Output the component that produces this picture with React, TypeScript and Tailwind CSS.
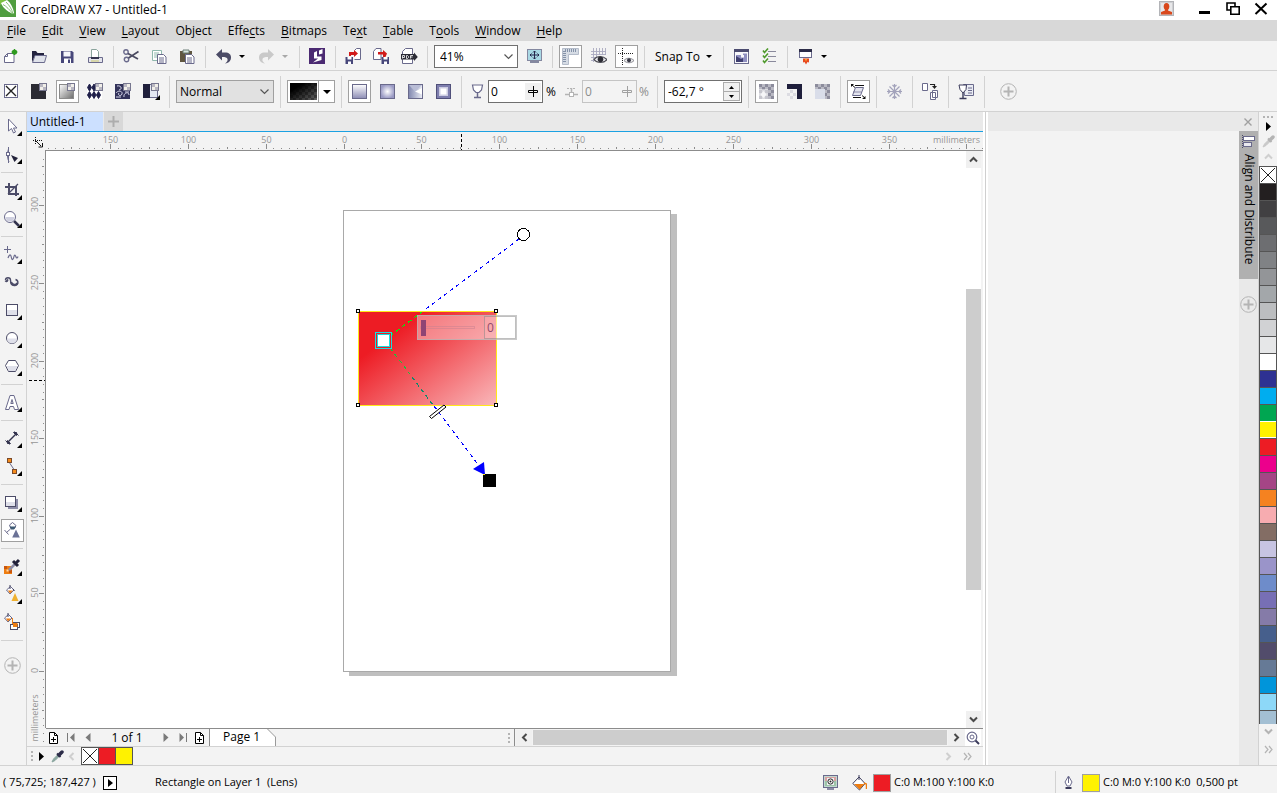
import React from "react";

const INK = "#3c3c5c";
const MID = "#6a6a8c";
const GREY = "#b4b4b4";

type Kids = { children?: React.ReactNode };

function Svg({ w = 17, h = 17, children }: { w?: number; h?: number } & Kids) {
  return (
    <svg width={w} height={h} viewBox={`0 0 ${w} ${h}`} fill="none" aria-hidden="true" className="block shrink-0">
      {children}
    </svg>
  );
}

function Tool({ label, active, children }: { label: string; active?: boolean } & Kids) {
  return (
    <button type="button" aria-label={label} className="flex h-[23px] w-7 shrink-0 items-center pl-[3px]">
      <span
        className={
          active
            ? "grid h-[23px] w-[23px] place-items-center border border-[#a0a0a0] bg-white"
            : "grid h-[23px] w-[23px] place-items-center border border-transparent"
        }
      >
        <Svg>{children}</Svg>
      </span>
    </button>
  );
}

function Sep({ tall }: { tall?: boolean }) {
  return (
    <span className="flex w-2 shrink-0 justify-center">
      <span className={tall ? "h-8 w-px bg-[#d2d2d2]" : "h-[22px] w-px bg-[#d2d2d2]"} />
    </span>
  );
}

function Caret({ color = "#000", label }: { color?: string; label: string }) {
  return (
    <button type="button" aria-label={label} className="flex h-[23px] w-[10px] shrink-0 items-center justify-center">
      <Svg w={6} h={3}>
        <path d="M0 0h6L3 3z" fill={color} />
      </Svg>
    </button>
  );
}

function Checker({ x, y, nx, ny, s, a, b }: { x: number; y: number; nx: number; ny: number; s: number; a: string; b: string }) {
  const cells = [];
  for (let i = 0; i < nx; i++)
    for (let j = 0; j < ny; j++)
      cells.push(<rect key={`${i}-${j}`} x={x + i * s} y={y + j * s} width={s} height={s} fill={(i + j) % 2 ? a : b} />);
  return <g shapeRendering="crispEdges">{cells}</g>;
}

function Corner() {
  return (
    <g>
      <rect x="8.5" y=".5" width="7" height="7" fill="#f1efe9" stroke="#77778f" />
      <path d="M9 1h3v3H9zM12 4h3v3h-3z" fill="#b9b7c2" />
    </g>
  );
}

function PlusCircle() {
  return (
    <Svg>
      <circle cx="8.5" cy="8.5" r="7.8" stroke={GREY} />
      <path d="M8.5 3.5v10M3.5 8.5h10" stroke={GREY} strokeWidth="2" />
    </Svg>
  );
}

const MENU: [string, string, string][] = [
  ["", "F", "ile"],
  ["", "E", "dit"],
  ["", "V", "iew"],
  ["", "L", "ayout"],
  ["Ob", "j", "ect"],
  ["Effe", "c", "ts"],
  ["", "B", "itmaps"],
  ["Te", "x", "t"],
  ["", "T", "able"],
  ["T", "o", "ols"],
  ["", "W", "indow"],
  ["", "H", "elp"],
];

function TitleBar() {
  return (
    <header className="flex h-5 shrink-0 items-start justify-between bg-white">
      <div className="flex h-5 items-center gap-[5px]">
        <span className="self-start">
          <Svg w={16} h={17}>
            <rect width="16" height="17" fill="#4f9d3f" />
            <path d="M0 0h6L0 5z" fill="#7cc142" />
            <path d="M1 3L7 0c4 3 6 8 7 12.5L13 14C9 12 3 9 1 3z" fill="#fff" />
            <path d="M3 4.500C6 6 10 10 13 14M6 2c3 3 6 7 7 12" stroke="#7dba6c" strokeWidth=".9" />
          </Svg>
        </span>
        <h1 className="text-xs">CorelDRAW X7 - Untitled-1</h1>
      </div>
      <div className="flex pr-[9px]">
        <button type="button" aria-label="Account" className="mr-[25px]">
          <Svg w={15} h={16}>
            <rect x=".5" y="1.500" width="14" height="14" fill="#cfd0d3" stroke="#b3b4b8" />
            <rect x="2" y="3" width="11" height="11" fill="#e8e8ea" />
            <ellipse cx="7.500" cy="6.500" rx="2.800" ry="3.500" fill="#d9481c" />
            <path d="M6 8h3v2.500l4 1.500v2.500H2V12l4-1.500z" fill="#d9481c" />
          </Svg>
        </button>
        <button type="button" aria-label="Minimize" className="mr-4">
          <Svg w={11} h={16}>
            <rect y="11" width="11" height="3" fill="#000" />
          </Svg>
        </button>
        <button type="button" aria-label="Restore" className="mr-[14px]">
          <Svg w={14} h={16}>
            <path d="M1 3h8v7H1z" stroke="#000" strokeWidth="1.600" />
            <path d="M4.800 6.800h8.400v7.400H4.800z" fill="#fff" stroke="#000" strokeWidth="1.600" />
          </Svg>
        </button>
        <button type="button" aria-label="Close">
          <Svg w={14} h={16}>
            <path d="M1.500 3.500l11 10.500M12.500 3.500l-11 10.500" stroke="#000" strokeWidth="2" />
          </Svg>
        </button>
      </div>
    </header>
  );
}

function MenuBar() {
  return (
    <nav className="flex h-[21px] shrink-0 items-center gap-4 bg-[#d8d8d8] pl-[7px]">
      {MENU.map(([a, u, b]) => (
        <button type="button" key={a + u + b} className="leading-4">
          {a}
          <span className="underline underline-offset-2">{u}</span>
          {b}
        </button>
      ))}
    </nav>
  );
}

function StandardBar() {
  return (
    <div className="flex h-[30px] shrink-0 items-center border-b border-[#d2d2d2] pt-[2px]">
      <div className="-ml-[3px] flex items-center">
        <Tool label="New">
          <path d="M1.500 8.500l3-3h6.500v9H1.500z" fill="#fff" stroke={MID} />
          <path d="M1.500 8.500h3v-3" stroke={MID} />
          <circle cx="11.500" cy="4" r="2.600" fill="#2e9a1e" />
          <path d="M11.500 1v6M8.500 4h6" stroke="#2e9a1e" />
        </Tool>
        <Tool label="Open">
          <path d="M1 14V3h4l1.500 2H13v3H4z" fill="#23233f" />
          <path d="M1.500 14.500L4 7.500h11.500l-2 7z" fill="#dfe2ea" stroke={MID} />
        </Tool>
        <Tool label="Save">
          <path d="M2 3h11l1.500 1.500V15H2z" fill="#47477a" />
          <rect x="4.500" y="3.500" width="7" height="5" fill="#f6f6fa" />
          <rect x="5" y="10.500" width="7" height="4.500" fill="#fff" />
          <rect x="9" y="11.500" width="2" height="3.500" fill="#47477a" />
        </Tool>
        <Tool label="Print">
          <path d="M4.500 10V1.500h5l2 2V10" fill="#fff" stroke="#8aa49c" />
          <path d="M1.500 9.500h14v5h-14z" fill="#e4e4ec" stroke={MID} />
          <path d="M4 10h8" stroke="#34344e" strokeWidth="2" />
          <path d="M4 13h8" stroke="#c9c86a" />
        </Tool>
        <Sep />
        <Tool label="Cut">
          <circle cx="3" cy="4" r="2.200" stroke={MID} strokeWidth="1.400" />
          <circle cx="3.500" cy="11.500" r="2.200" stroke={MID} strokeWidth="1.400" />
          <path d="M5 5.500l10 5.500M5.500 10L15.500 3.500" stroke="#4a4a60" strokeWidth="1.700" />
        </Tool>
        <Tool label="Copy">
          <path d="M1.500 2.500h9v10h-9z" fill="#fff" stroke="#8fb8ad" />
          <path d="M3 5h5M3 7h4M3 9h4" stroke="#8fb8ad" />
          <path d="M6.500 6.500h6l2.500 2.500v6.500H6.500z" fill="#fff" stroke={MID} />
          <path d="M8 10h5M8 12h5M8 14h5" stroke={MID} />
        </Tool>
        <Tool label="Paste">
          <path d="M1 3h12v11H1z" fill="#5f5640" />
          <path d="M4 2h6v3H4z" fill="#d8e6df" stroke="#6d7f78" />
          <path d="M6.500 6.500h6l2.500 2.500v6.500H6.500z" fill="#fff" stroke={MID} />
          <path d="M8 10h5M8 12h5M8 14h5" stroke={MID} />
        </Tool>
        <Sep />
        <Tool label="Undo">
          <path d="M1 6.500L7 1v3.500h3c4 0 6 2 6 5 0 3-2 5.500-6 6 2-1.500 3-3 2.500-4.500-.5-1.500-2-2-5.500-2V12.500z" fill="#4b4b66" />
        </Tool>
        <Caret label="Undo list" />
        <span className="w-[5px]" />
        <Tool label="Redo">
          <path d="M16 6.500L10 1v3.500H7c-4 0-6 2-6 5 0 3 2 5.500 6 6-2-1.500-3-3-2.500-4.500.5-1.500 2-2 5.500-2V12.500z" fill="#c9c9c9" />
        </Tool>
        <Caret label="Redo list" color="#a8a8a8" />
        <span className="w-[5px]" />
        <Sep />
        <Tool label="Search Content">
          <rect x="0" y="0" width="16" height="16" fill="#4b2a72" />
          <path d="M5 4.500l3-1.500v5.500h4.500v3.500L4 14.500l5-4H5z" fill="#fff" />
          <path d="M10 2.500l3.500-1.500v4.500L10 6.500z" fill="#fff" />
        </Tool>
        <Sep />
        <Tool label="Import">
          <path d="M9.500 2.500l2-2h4v11h-6" fill="#fff" stroke={MID} />
          <path d="M4 8V4h5V2l4 3.500-4 3.500V7H6v1z" fill="#d11a1a" />
          <path d="M.5 9H8v7H.5z" fill="#47477a" />
          <path d="M2.500 9h4v2.500h-4zM3 13.500h3V16H3z" fill="#fff" />
        </Tool>
        <Tool label="Export">
          <path d="M.5 11.500V3.500l2.500-3h5v11z" fill="#fff" stroke={MID} />
          <path d="M5 4h5V2l4 3.500L12.500 9 10 9V6.500H5z" fill="#d11a1a" />
          <path d="M8.500 9H16v7H8.500z" fill="#47477a" />
          <path d="M10.500 9h4v2.500h-4zM11 13.500h3V16h-3z" fill="#fff" />
        </Tool>
        <Tool label="Publish to PDF">
          <path d="M1.500 15.500v-12l3-3h7v15z" fill="#fff" stroke={MID} />
          <path d="M0 6h13V4.500L16.800 9 13 13v-1.500H0z" fill="#2b2b35" />
          <path d="M1.500 10.500v-3h2v2h-2M5.500 7.500v3h1l1-1v-1l-1-1zM9.500 10.500v-3h2.500M9.500 9h2" stroke="#fff" strokeWidth=".8" />
        </Tool>
        <Sep />
        <div className="relative ml-[3px] flex h-[23px] w-[84px] items-center border border-[#707070] bg-white">
          <select aria-label="Zoom level" defaultValue="41%" className="h-full w-full appearance-none bg-transparent pl-[5px] outline-none">
            <option>41%</option>
          </select>
          <span className="pointer-events-none absolute right-1">
            <Svg w={9} h={6}>
              <path d="M.5.5l4 4 4-4" stroke="#555" strokeWidth="1.200" />
            </Svg>
          </span>
        </div>
        <span className="w-[2px]" />
        <Tool label="Full Screen Preview">
          <rect x="1.500" y="1.500" width="14" height="11" fill="#a9d8e4" stroke="#8488a0" />
          <path d="M8.500 3v8M4 7h9M7 4.500L8.500 3 10 4.500M7 9.500L8.500 11 10 9.500M5.500 5.500L4 7l1.500 1.500M11.500 5.500L13 7l-1.500 1.500" stroke="#25254a" />
          <path d="M4 14h9" stroke="#8488a0" strokeWidth="2" />
        </Tool>
        <Sep />
        <Tool label="Show Rulers" active>
          <path d="M.5.5h16v6h-10v10h-6z" fill="#d5dbe4" stroke="#b4bcca" />
          <path d="M3 2.500h12M2.500 3v12" stroke="#8492a8" strokeDasharray="1 1" strokeWidth="3" />
        </Tool>
        <Tool label="Show Grid">
          <path d="M1 3.500h15M1 6.500h15M1 9.500h6M1 12.500h4M3.500 0v14M6.500 0v12M9.500 0v7M12.500 0v7M15.500 0v7" stroke="#a9a9c0" strokeWidth=".9" />
          <path d="M4 11.500c3-4 9-4 13 0-3 4-10 4-13 0z" fill="#e9e9ee" stroke="#4d4d55" strokeWidth="1.200" />
          <circle cx="10.500" cy="11.300" r="2.800" fill="#2d2d35" />
        </Tool>
        <Tool label="Show Guidelines" active>
          <path d="M0 5.500h16M4.500 0v17" stroke="#222" strokeDasharray="1 1" />
          <path d="M6 12.500c2.500-3 7-3 10 0-2.500 3-7.500 3-10 0z" fill="#eee" stroke="#8a8a92" />
          <circle cx="11" cy="12.300" r="2" fill="#3b3b48" />
        </Tool>
        <Sep />
        <button type="button" className="flex h-[23px] w-[71px] items-center justify-between pl-[7px] pr-[7px]">
          Snap To
          <Svg w={6} h={3}>
            <path d="M0 0h6L3 3z" fill="#000" />
          </Svg>
        </button>
        <Sep />
        <Tool label="Options">
          <rect x="1.500" y="1.500" width="14" height="14" fill="#f8f8fb" stroke={MID} />
          <rect x="1" y="1" width="15" height="3" fill="#4c4c70" />
          <path d="M3 7h5v2.500h3V7H10V5.500h4V14H3z" fill="#8f8fc0" />
          <path d="M3 8l5 3 2-1v4H3z" fill="#3f3f70" />
        </Tool>
        <Tool label="Launch Options">
          <path d="M7 3.500h8M7 8.500h8M7 13.500h8" stroke="#8a8a9c" strokeWidth="1.200" />
          <path d="M2 2.500l1.500 2L7 .5M2 7.500l1.500 2 3.500-4M2 12.500l1.500 2 3.500-4" stroke="#4f9a2c" strokeWidth="1.600" />
        </Tool>
        <Sep />
        <Tool label="Application Launcher">
          <rect x="2.500" y="1.500" width="12" height="8" fill="#fff" stroke={MID} />
          <rect x="2" y="1" width="13" height="3" fill="#2c2c48" />
          <path d="M6 10.500h6v4l-1.500-.5-1.500 2.500-1.500-2.500-1.500.5z" fill="#e8491f" />
          <path d="M8 11h2l-1 2.500z" fill="#ffc02e" />
        </Tool>
        <Caret label="Launcher list" />
      </div>
    </div>
  );
}

function GradientDefs() {
  return (
    <defs>
      <linearGradient id="gLin" x1="0" y1="0" x2="0" y2="1">
        <stop offset="0" stopColor="#fff" />
        <stop offset="1" stopColor="#8d8db5" />
      </linearGradient>
      <radialGradient id="gRad">
        <stop offset="0" stopColor="#fff" />
        <stop offset="1" stopColor="#9a9ac4" />
      </radialGradient>
      <linearGradient id="gCon" x1="0" y1="0" x2="1" y2="0">
        <stop offset="0" stopColor="#7f86ae" />
        <stop offset="1" stopColor="#eceef6" />
      </linearGradient>
      <linearGradient id="gGrey" x1="0" y1="0" x2="1" y2="1">
        <stop offset="0" stopColor="#fff" />
        <stop offset="1" stopColor="#6c6c6c" />
      </linearGradient>
      <linearGradient id="gBlack" x1="0" y1="0" x2="1" y2="1">
        <stop offset="0.250" stopColor="#000" />
        <stop offset="1" stopColor="#000" stopOpacity="0.300" />
      </linearGradient>
    </defs>
  );
}

function SliderIcon({ color }: { color: string }) {
  return (
    <Svg w={10} h={11}>
      <path d="M5.500 0v11" stroke={color} />
      <path d="M.5 4.500h9v2h-9z" fill="#f4f4f4" stroke={color} />
      <path d="M5.500 4v7" stroke={color} />
    </Svg>
  );
}

function PropertyBar() {
  return (
    <div className="flex h-[41px] shrink-0 items-center border-b border-[#d2d2d2] pt-px">
      <div className="-ml-[3px] flex items-center">
        <Tool label="No Transparency">
          <rect x="1.500" y="1.500" width="13" height="13" fill="#fff" stroke={MID} />
          <path d="M3 3l10 10M13 3L3 13" stroke="#222" strokeWidth="1.400" />
        </Tool>
        <Tool label="Uniform Transparency">
          <rect x="0" y="1" width="15" height="15" fill="#2b2b33" />
          <Corner />
        </Tool>
        <Tool label="Fountain Transparency" active>
          <GradientDefs />
          <rect x=".5" y="1.500" width="14" height="14" fill="url(#gGrey)" stroke="#8a8a8a" />
          <Corner />
        </Tool>
        <Tool label="Vector Pattern Transparency">
          <rect x="0" y="1" width="15" height="15" fill="#fff" />
          <path d="M2.500 1l2 3.500-2 3.500-2-3.500zM7 1l2 3.500L7 8 5 4.500zM2.500 8.500l2 3.500-2 3.500-2-3.500zM7 8.500L9 12l-2 3.500L5 12zM11.500 8.500l2 3.500-2 3.500-2-3.500z" fill="#20204a" stroke="#20204a" />
          <Corner />
        </Tool>
        <Tool label="Bitmap Pattern Transparency">
          <rect x="0" y="1" width="15" height="15" fill="#33335a" />
          <path d="M2 3c4-1 6 3 2 4M1 10c2-3 7-2 6 1s-5 1-3-1M9 14c-1-4 5-6 5-2M10 9h4M1 14h5" stroke="#d5d5e8" />
          <Corner />
        </Tool>
        <Tool label="Two-Color Pattern Transparency">
          <rect x=".5" y="1.500" width="14" height="13" fill="#e4e8f2" stroke={MID} />
          <rect x="0" y="1" width="7" height="14" fill="#20203c" />
          <Corner />
          <path d="M17 12v5h-5z" fill="#000" />
        </Tool>
        <Sep tall />
        <div className="relative ml-[3px] mr-[2px] flex h-[23px] w-[98px] items-center border border-[#a0a0a0] bg-[#e1e1e1]">
          <select aria-label="Merge mode" defaultValue="Normal" className="h-full w-full appearance-none bg-transparent pl-[3px] outline-none">
            <option>Normal</option>
          </select>
          <span className="pointer-events-none absolute right-1">
            <Svg w={9} h={6}>
              <path d="M.5.5l4 4 4-4" stroke="#555" strokeWidth="1.200" />
            </Svg>
          </span>
        </div>
        <Sep tall />
        <button type="button" aria-label="Transparency picker" className="ml-[3px] mr-[2px] flex h-[23px] w-12 items-center border border-[#a0a0a0] bg-white">
          <span className="flex h-full w-[31px] items-center justify-center border-r border-[#a0a0a0]">
            <Svg w={27} h={17}>
              <Checker x={0} y={0} nx={9} ny={6} s={3} a="#8c8c8c" b="#5f5f5f" />
              <rect width="27" height="17" fill="url(#gBlack)" />
            </Svg>
          </span>
          <span className="flex flex-1 justify-center">
            <Svg w={8} h={4}>
              <path d="M0 0h8L4 4z" fill="#000" />
            </Svg>
          </span>
        </button>
        <Sep tall />
        <Tool label="Linear" active>
          <rect x="1.500" y="1.500" width="14" height="14" fill="url(#gLin)" stroke={MID} />
        </Tool>
        <Tool label="Elliptical">
          <rect x="1.500" y="1.500" width="14" height="14" fill="url(#gRad)" stroke={MID} />
        </Tool>
        <Tool label="Conical">
          <rect x="1.500" y="1.500" width="14" height="14" fill="url(#gCon)" stroke={MID} />
          <path d="M2 2h13L8 8.500z" fill="#b9bdd6" />
          <path d="M15 5L8 8.500l7 3z" fill="#fff" />
        </Tool>
        <Tool label="Rectangular">
          <rect x="1.500" y="1.500" width="14" height="14" fill="#7e7eae" stroke="#50507a" />
          <rect x="4" y="4" width="9" height="9" fill="#cdcde2" />
          <rect x="5.500" y="5.500" width="6" height="6" fill="#fff" />
        </Tool>
        <Sep tall />
        <span className="flex w-[23px] justify-center pl-[2px]">
          <Svg w={13} h={15}>
            <path d="M1.500 1h10l-1 5-2.500 2.500h-3L2.500 6z" fill="#fff" stroke={MID} strokeWidth="1.200" />
            <path d="M6.500 8.500V14M3 13.500h7" stroke={MID} strokeWidth="1.500" />
          </Svg>
        </span>
        <div className="flex h-[23px] w-[55px] items-center border border-[#707070] bg-white">
          <input aria-label="Node transparency" defaultValue="0" className="h-full w-9 pl-[2px] outline-none" />
          <span className="grid h-[17px] w-4 place-items-center bg-[#f0f0f0]">
            <SliderIcon color="#000" />
          </span>
        </div>
        <span className="w-[18px] pl-[3px]">%</span>
        <span className="flex w-[21px] justify-center">
          <Svg w={13} h={12}>
            <path d="M2 2.500h9" stroke={GREY} strokeDasharray="2 1" />
            <path d="M0 8.500h4M9 8.500h4M6.500 2v4" stroke={GREY} strokeWidth="1.500" />
            <rect x="4.500" y="6.500" width="4" height="4" fill="#fff" stroke={GREY} />
          </Svg>
        </span>
        <div className="flex h-[23px] w-[55px] items-center border border-[#c4c4c4] bg-[#f3f3f3]">
          <input aria-label="Node position" disabled defaultValue="0" className="h-full w-9 pl-[2px] text-[#8d8d8d]" />
          <span className="grid h-[17px] w-4 place-items-center">
            <SliderIcon color="#a0a0a0" />
          </span>
        </div>
        <span className="w-[16px] pl-[2px] text-[#8d8d8d]">%</span>
        <Sep tall />
        <div className="ml-[3px] mr-[2px] flex h-[23px] w-[78px] items-center border border-[#707070] bg-white">
          <input aria-label="Rotate" defaultValue="-62,7 °" className="h-full min-w-0 flex-1 pl-[3px] outline-none" />
          <span className="mr-px flex h-[19px] w-[17px] flex-col border border-[#acacac] bg-[#f0f0f0]">
            <button type="button" aria-label="Increase" className="grid flex-1 place-items-center border-b border-[#acacac]">
              <Svg w={5} h={3}>
                <path d="M0 3h5L2.500 0z" fill="#000" />
              </Svg>
            </button>
            <button type="button" aria-label="Decrease" className="grid flex-1 place-items-center">
              <Svg w={5} h={3}>
                <path d="M0 0h5L2.500 3z" fill="#000" />
              </Svg>
            </button>
          </span>
        </div>
        <Sep tall />
        <Tool label="All" active>
          <Checker x={1} y={1} nx={5} ny={5} s={3} a="#b9b9c3" b="#8c8c9c" />
          <path d="M1 6h9v10H1z" fill="#fff" opacity=".5" />
          <path d="M5.500 8l3 3.500-3 3.500-3-3.500z" fill="#f6f6f8" />
        </Tool>
        <Tool label="Fill">
          <path d="M1 1h15v15h-5V6H1z" fill="#1f1f3c" />
          <Checker x={1} y={7} nx={3} ny={3} s={3} a="#dcdce2" b="#f4f4f4" />
        </Tool>
        <Tool label="Outline">
          <Checker x={1} y={1} nx={5} ny={5} s={3} a="#b9b9c3" b="#8c8c9c" />
          <rect x="1" y="6" width="10" height="10" fill="#d9dde9" />
        </Tool>
        <Sep tall />
        <Tool label="Free Scale and Skew" active>
          <path d="M5.500 4.500h8l-3 8h-8z" fill="#e3e4ee" stroke={MID} />
          <path d="M3 9h8.500" stroke={MID} strokeWidth=".7" />
          <path d="M2 2l3 2.500M12 12.500l3 2.500M5 2.500h9M3 14.500h8" stroke="#111" />
          <path d="M1 1h3l-3 3zM15.500 16h-3.500l3.500-3z" fill="#111" />
        </Tool>
        <Sep tall />
        <Tool label="Freeze Transparency">
          <path d="M8.500 1v15M1 8.500h15M3.500 3.500l10 10M13.500 3.500l-10 10M6.500 2l2 2 2-2M6.500 15l2-2 2 2M2 6.500l2 2-2 2M15 6.500l-2 2 2 2" stroke="#a3a3bb" strokeWidth="1.200" />
        </Tool>
        <Sep tall />
        <Tool label="Copy Transparency">
          <path d="M.5.500h5v7h-5z" fill="#fff" stroke={MID} />
          <path d="M8 1.500h4.500v2" stroke="#222" strokeWidth="1.200" />
          <path d="M10 3h5l-2.500 3z" fill="#222" />
          <path d="M10.500 7.500h5v7h-5zM8.500 9.500h5v7h-5z" fill="#fff" stroke={MID} />
        </Tool>
        <Sep tall />
        <Tool label="Edit Transparency">
          <path d="M5.500 1.500h10v11h-9z" fill="#e9ebf3" stroke={MID} />
          <path d="M10 5h4M10 7.500h4M10 10h4" stroke={MID} />
          <path d="M1 2h7.500L8 6.500 5 10 2 6.500z" fill="#fff" stroke={INK} />
          <path d="M5 10v5M1.500 15.500h7" stroke={INK} strokeWidth="1.400" />
        </Tool>
        <Sep tall />
        <button type="button" aria-label="Customize" className="ml-3">
          <PlusCircle />
        </button>
      </div>
    </div>
  );
}

type BoxItem = { label: string; icon?: React.ReactNode; fly?: boolean; active?: boolean; sep?: boolean };

const BOX: BoxItem[] = [
  { label: "Pick", fly: true, icon: <path d="M8.500 7v12l3-2.500 2 4.500 2-1-2-4h3.500z" fill="#fff" stroke={MID} /> },
  {
    label: "Shape",
    fly: true,
    icon: (
      <g>
        <path d="M8.500 7v16M8.500 9C7 13 7 18 9 22" stroke={MID} />
        <rect x="6.500" y="12.500" width="3" height="3" fill="#fff" stroke={MID} />
        <path d="M11 15l7 3-3.500 4z" fill="#22223a" />
      </g>
    ),
  },
  { label: "s1", sep: true },
  {
    label: "Crop",
    fly: true,
    icon: (
      <g stroke="#4c4c68" strokeWidth="2">
        <path d="M9 7v11h10M5 11h11v9" />
        <path d="M8 18L18 8" strokeWidth="1.200" />
      </g>
    ),
  },
  {
    label: "Zoom",
    fly: true,
    icon: (
      <g>
        <path d="M14 17l5 5" stroke="#33334e" strokeWidth="2.500" />
        <circle cx="10" cy="13" r="5.500" fill="#fff" stroke={MID} />
        <path d="M5.500 13h9a4.500 4.500 0 0 1-9 0z" fill="#cfd0e0" />
      </g>
    ),
  },
  { label: "s2", sep: true },
  {
    label: "Freehand",
    fly: true,
    icon: (
      <g stroke={MID}>
        <path d="M7.500 6v7M4 9.500h7" />
        <path d="M8 18c2-5 3-3 3.500 0s2 1 2.500-1.500 1.500-1 2 .5 1.500 1 2-.5" strokeWidth="1.200" />
      </g>
    ),
  },
  {
    label: "Artistic Media",
    icon: (
      <g stroke="#4c4c68">
        <path d="M5.500 12c0-3 5-3 5 0 0 4 1 6 4.500 5.500 3.500-.5 4-5 .5-6" strokeWidth="1.400" />
        <path d="M5.500 12.500c1 1.500 2.500 0 1.500-1M11 14c1 3 5 4 6.500 1" strokeWidth="2.200" />
      </g>
    ),
  },
  {
    label: "Rectangle",
    fly: true,
    icon: (
      <g>
        <rect x="6.500" y="8.500" width="11" height="11" fill="#fff" stroke="#4c4c68" />
        <rect x="7" y="14" width="10" height="5" fill="#dfe0ea" />
      </g>
    ),
  },
  {
    label: "Ellipse",
    fly: true,
    icon: (
      <g>
        <circle cx="12" cy="14" r="5.500" fill="#fff" stroke="#4c4c68" />
        <path d="M7 14.500h10a5 5 0 0 1-10 0z" fill="#dfe0ea" />
      </g>
    ),
  },
  {
    label: "Polygon",
    fly: true,
    icon: (
      <g>
        <path d="M8.500 8.500h7l3 5-3 6h-7l-3-6z" fill="#fff" stroke="#4c4c68" />
        <path d="M6.500 14h11l-2.500 5H9z" fill="#dfe0ea" />
      </g>
    ),
  },
  { label: "s3", sep: true },
  {
    label: "Text",
    fly: true,
    icon: (
      <g>
        <path d="M5.500 21.500l4.500-14h4l4.500 14h-4l-1-3h-3.500l-1 3z" fill="#fff" stroke={MID} />
        <path d="M10.800 15.500L12 11.500l1.200 4z" fill="#f3f3f3" stroke={MID} />
      </g>
    ),
  },
  { label: "s4", sep: true },
  {
    label: "Dimension",
    fly: true,
    icon: (
      <g stroke="#33334e">
        <path d="M7 19L17 9" strokeWidth="1.500" />
        <path d="M5.500 16.500l4 4M14.500 7.500l4 4" />
        <path d="M7.500 16.500v3h3zM13.500 8.500h3v3z" fill="#33334e" />
      </g>
    ),
  },
  {
    label: "Connector",
    fly: true,
    icon: (
      <g>
        <path d="M9 10l6 9" stroke={MID} />
        <rect x="7.500" y="6.500" width="4" height="4" fill="#f58a1a" stroke="#7a4a2a" />
        <rect x="12.500" y="17.500" width="4" height="4" fill="#f58a1a" stroke="#7a4a2a" />
      </g>
    ),
  },
  { label: "s5", sep: true },
  {
    label: "Drop Shadow",
    fly: true,
    icon: (
      <g>
        <rect x="8" y="11" width="10" height="10" fill="#8d8da8" />
        <rect x="5.500" y="8.500" width="10" height="10" fill="#fff" stroke="#4c4c68" />
        <rect x="6" y="14" width="9" height="4" fill="#dfe0ea" />
      </g>
    ),
  },
  {
    label: "Transparency",
    active: true,
    icon: (
      <g>
        <path d="M9.500 9l3-2.500 3.500 3-1.500 3-3.500 0z" fill="#fff" stroke={MID} />
        <path d="M9.500 10.500h6.500l-2 3h-3z" fill="#3e5a74" />
        <path d="M10.500 13l-4 3.500M4.500 14l4 4.500" stroke={MID} />
        <path d="M16 13.500l3.800 8h-7.600z" fill="#6b7296" />
      </g>
    ),
  },
  { label: "s6", sep: true },
  {
    label: "Color Eyedropper",
    fly: true,
    icon: (
      <g>
        <rect x="4" y="14" width="8" height="8" fill="#ee7d11" />
        <path d="M4 14h3v3H4zM9 18h3v3H9z" fill="#c9560c" />
        <path d="M6.500 17.500h2v2h-2z" fill="#ffd9a8" />
        <path d="M9 18l7-7" stroke="#8c8ca6" strokeWidth="2.500" />
        <path d="M13 9l5 5M15.500 11.500L19 8" stroke="#22223a" strokeWidth="3" />
      </g>
    ),
  },
  {
    label: "Interactive Fill",
    fly: true,
    icon: (
      <g>
        <path d="M6.500 10l4-3.500L14 10l-4 4z" fill="#fff" stroke={MID} />
        <path d="M8 10.500h5L10 13.500z" fill="#ee7d11" />
        <path d="M10 5v4M13 9l1.500 2" stroke={INK} />
        <path d="M15 13l3.500 8h-7z" fill="#efb02e" />
      </g>
    ),
  },
  {
    label: "Smart Fill",
    icon: (
      <g>
        <path d="M4.500 10l4-3.500L12 10l-4 4z" fill="#fff" stroke={MID} />
        <path d="M6 10.500h5L8 13.500z" fill="#ee7d11" />
        <path d="M8 5v4" stroke={INK} />
        <rect x="12.500" y="14.500" width="7" height="5" fill="#fff" stroke="#4c4c68" />
        <rect x="10.500" y="16.500" width="7" height="5" fill="#fff" stroke="#4c4c68" />
        <rect x="13" y="15" width="4.500" height="4" fill="#ee7d11" />
        <path d="M12.500 10v6" stroke="#ee7d11" />
      </g>
    ),
  },
  { label: "s7", sep: true },
];

function Toolbox() {
  return (
    <aside className="flex w-[27px] shrink-0 flex-col items-start border-r border-[#d2d2d2]">
      {BOX.map((b) =>
        b.sep ? (
          <span key={b.label} className="flex h-2 shrink-0 items-center pl-px">
            <span className="h-px w-[22px] bg-[#d2d2d2]" />
          </span>
        ) : (
          <button
            type="button"
            key={b.label}
            aria-label={b.label}
            className={b.active ? "h-7 w-6 shrink-0 py-[3px] pl-px" : "h-7 w-6 shrink-0"}
          >
            {b.active ? (
              <span className="block h-[23px] w-[23px] overflow-hidden border border-[#a0a0a0] bg-white">
                <svg width="21" height="21" viewBox="2 4 21 21" fill="none" aria-hidden="true">
                  {b.icon}
                </svg>
              </span>
            ) : (
              <Svg w={24} h={28}>
                {b.icon}
                {b.fly && <path d="M22 19v5h-5z" fill="#000" />}
              </Svg>
            )}
          </button>
        ),
      )}
      <button type="button" aria-label="Customize toolbox" className="ml-1 mt-[13px]">
        <PlusCircle />
      </button>
    </aside>
  );
}

const PX_PER_MM = 327 / 210;

function TopRuler() {
  const x0 = 317;
  const ticks = [];
  for (let mm = -190; mm <= 410; mm += 5) {
    const x = Math.floor(x0 + mm * PX_PER_MM) + 0.5;
    if (x < 19) continue;
    const major = mm % 50 === 0;
    const top = major ? 12 : mm % 25 === 0 ? 15 : 16;
    ticks.push(<path key={mm} d={`M${x} ${top}V17`} stroke="#8c8c8c" />);
    if (major && mm < 400)
      ticks.push(
        <text key={`t${mm}`} x={x} y="11" textAnchor="middle" fill="#969696" fontSize="9">
          {Math.abs(mm)}
        </text>,
      );
  }
  return (
    <svg className="block h-[19px] w-full shrink-0" fill="none">
      <path d="M6 8.500h6M8.500 5v7M12 8.500h4" stroke="#111" strokeDasharray="1 1" />
      <path d="M9 9l5 5M15.500 11v4h-4" stroke="#111" />
      {ticks}
      <text x="906" y="11" fill="#969696" fontSize="9">
        millimeters
      </text>
      <path d="M434.500 2v16" stroke="#000" strokeDasharray="3 2" />
      <path d="M18 18.500h1200" stroke="#8c8c8c" />
    </svg>
  );
}

function LeftRuler() {
  const y0 = 520.5;
  const ticks = [];
  for (let mm = -45; mm <= 330; mm += 5) {
    const y = Math.floor(y0 - mm * PX_PER_MM * 0.997) + 0.5;
    const major = mm % 50 === 0;
    const left = major ? 12 : mm % 25 === 0 ? 15 : 16;
    ticks.push(<path key={mm} d={`M${left} ${y}H17`} stroke="#8c8c8c" />);
    if (major)
      ticks.push(
        <text key={`t${mm}`} x="11" y={y - 1} textAnchor="middle" fill="#969696" fontSize="9" transform={`rotate(-90 11 ${y - 1})`}>
          {mm}
        </text>,
      );
  }
  return (
    <svg className="block h-full w-[19px] shrink-0" fill="none">
      {ticks}
      <text x="11" y="567" textAnchor="middle" fill="#969696" fontSize="9" transform="rotate(-90 11 567)">
        millimeters
      </text>
      <path d="M2 229.500h16" stroke="#000" strokeDasharray="3 2" />
      <path d="M18.500 0v577" stroke="#8c8c8c" />
    </svg>
  );
}

function Canvas() {
  return (
    <div className="relative min-w-0 flex-1 overflow-hidden bg-white">
      <svg className="absolute inset-0 h-full w-full" fill="none">
        <defs>
          <linearGradient id="fade" gradientUnits="userSpaceOnUse" x1="383" y1="341" x2="489" y2="480">
            <stop offset="0" stopColor="#ed1c24" />
            <stop offset="1" stopColor="#fff" />
          </linearGradient>
        </defs>
        <g transform="translate(-46 -151)">
          <rect x="349" y="214" width="328" height="462" fill="#bfbfbf" />
          <rect x="343.500" y="210.500" width="327" height="461" fill="#fff" stroke="#a9a9a9" />
          <rect x="358.500" y="311.500" width="138" height="94" fill="url(#fade)" stroke="#ffe81a" />
          <g fill="#fff" stroke="#000">
            <rect x="356.500" y="309.500" width="3" height="3" />
            <rect x="494.500" y="309.500" width="3" height="3" />
            <rect x="356.500" y="403.500" width="3" height="3" />
            <rect x="494.500" y="403.500" width="3" height="3" />
          </g>
          <g strokeWidth="1" strokeDasharray="4 3.500" shapeRendering="crispEdges">
            <path d="M390 336L422 312" stroke="#10e010" />
            <path d="M426 309L519 239" stroke="#00f" />
            <path d="M390 348L410 374" stroke="#1cc03a" />
            <path d="M412 377L433 405" stroke="#128a6a" />
            <path d="M434 406L480 467" stroke="#00f" />
          </g>
          <rect x="375.500" y="332.500" width="16" height="16" fill="#ed1c24" stroke="#17e0e0" />
          <rect x="377.500" y="334.500" width="12" height="12" fill="#fff" stroke="#17e0e0" />
          <circle cx="523.500" cy="234.500" r="6" fill="#fff" stroke="#000" shapeRendering="crispEdges" />
          <path d="M429.500 416.500L444 405l2 2-14.500 11.500z" fill="#fff" stroke="#000" />
          <path d="M473 469l11-7 1 13z" fill="#00f" />
          <rect x="483" y="474" width="13" height="13" fill="#000" />
          <rect x="483" y="474" width="2" height="1" fill="#fff200" />
        </g>
      </svg>
      <div className="absolute left-[371px] top-[164px] flex h-[25px] w-[100px] items-center border border-[#b4b4b4]/70 bg-white/40">
        <input
          type="range"
          aria-label="Transparency amount"
          min="0"
          max="100"
          defaultValue="0"
          className="ml-[2px] h-4 w-[55px] appearance-none bg-transparent [&::-webkit-slider-runnable-track]:h-[3px] [&::-webkit-slider-runnable-track]:border [&::-webkit-slider-runnable-track]:border-[#c88090]/50 [&::-webkit-slider-thumb]:mt-[-7px] [&::-webkit-slider-thumb]:h-4 [&::-webkit-slider-thumb]:w-[5px] [&::-webkit-slider-thumb]:appearance-none [&::-webkit-slider-thumb]:bg-[#8f4474]"
        />
        <input
          aria-label="Transparency value"
          defaultValue="0"
          className="ml-auto h-full w-8 border border-[#808080]/50 bg-white/10 pl-[2px] text-[#93496a] outline-none"
        />
      </div>
    </div>
  );
}

function Chevron({ dir, color = "#4a4a4a" }: { dir: "up" | "down" | "left" | "right"; color?: string }) {
  const d = {
    up: "M1 6.500L4.500 3 8 6.500",
    down: "M1 2.500L4.500 6 8 2.500",
    left: "M6.500 1L3 4.500 6.500 8",
    right: "M2.500 1L6 4.500 2.500 8",
  }[dir];
  return (
    <Svg w={9} h={9}>
      <path d={d} stroke={color} strokeWidth="2" />
    </Svg>
  );
}

function AddPage() {
  return (
    <Svg w={11} h={12}>
      <path d="M1.500.500h5l3 3v8h-8z" fill="#fff" stroke="#000" />
      <path d="M6.500.500v3h3M5.500 5v5M3 7.500h5" stroke="#000" />
    </Svg>
  );
}

function PageBar() {
  return (
    <div className="flex h-[17px] shrink-0 items-center">
      <div className="flex h-full w-[469px] shrink-0 items-center border-r border-[#8c8c8c] pl-[2px]">
        <button type="button" aria-label="Add page before">
          <AddPage />
        </button>
        <button type="button" aria-label="First page" className="ml-2">
          <Svg w={8} h={9}>
            <path d="M.5 0v9" stroke="#7a7a7a" />
            <path d="M7.500 0v9L3 4.500z" fill="#7a7a7a" />
          </Svg>
        </button>
        <button type="button" aria-label="Previous page" className="ml-[10px]">
          <Svg w={6} h={9}>
            <path d="M5.500 0v9L.5 4.500z" fill="#7a7a7a" />
          </Svg>
        </button>
        <span className="w-[72px] text-center leading-4">1 of 1</span>
        <button type="button" aria-label="Next page">
          <Svg w={6} h={9}>
            <path d="M.5 0v9l5-4.500z" fill="#7a7a7a" />
          </Svg>
        </button>
        <button type="button" aria-label="Last page" className="ml-[10px]">
          <Svg w={8} h={9}>
            <path d="M7.500 0v9" stroke="#7a7a7a" />
            <path d="M.5 0v9L5 4.500z" fill="#7a7a7a" />
          </Svg>
        </button>
        <button type="button" aria-label="Add page after" className="ml-[7px]">
          <AddPage />
        </button>
        <button type="button" className="relative ml-1 flex h-full w-[67px] items-start border-l border-[#8c8c8c] bg-white pl-[13px] leading-[15px]">
          Page 1
          <span className="absolute right-0 top-0">
            <Svg w={9} h={17}>
              <path d="M0 0h9v17h-1V8z" fill="#f3f3f3" />
              <path d="M.5 0l8 8v9" stroke="#9a9a9a" />
            </Svg>
          </span>
        </button>
        <span className="ml-auto mr-[3px]">
          <Svg w={3} h={10}>
            <path d="M0 0h2v2H0zM0 4h2v2H0zM0 8h2v2H0z" fill={GREY} />
          </Svg>
        </span>
      </div>
      <div className="flex h-full min-w-0 flex-1 items-center gap-px pl-px">
        <button type="button" aria-label="Scroll left" className="grid h-4 w-4 place-items-center bg-[#f0f0f0]">
          <Chevron dir="left" />
        </button>
        <span className="h-[15px] flex-1 bg-[#cdcdcd]" />
        <button type="button" aria-label="Scroll right" className="grid h-4 w-[17px] place-items-center bg-[#f0f0f0]">
          <Chevron dir="right" />
        </button>
      </div>
      <button type="button" aria-label="Navigator" className="mr-[2px] grid h-full w-4 place-items-center bg-white">
        <Svg w={14} h={14}>
          <circle cx="6" cy="6" r="4.800" stroke={MID} strokeWidth="1.200" />
          <circle cx="6" cy="6" r="2" stroke={MID} />
          <path d="M9.500 9.500l3.500 3.500" stroke={INK} strokeWidth="2" />
        </Svg>
      </button>
    </div>
  );
}

function Dropper({ a, b }: { a: string; b: string }) {
  return (
    <Svg w={13} h={13}>
      <path d="M1 12l1.500-3L7 4.500 8.500 6 4 10.500z" fill={b} stroke={b} />
      <path d="M6 3.500L9.500 7" stroke={a} strokeWidth="2" />
      <path d="M8 5l3-3" stroke={a} strokeWidth="3.500" strokeLinecap="round" />
    </Svg>
  );
}

function PageScene() {
  return (
    <section className="flex min-w-0 flex-1 flex-col">
      <div className="flex h-5 shrink-0 border-b border-[#1ba1e2] bg-[#e9e9e9]">
        <button type="button" className="w-[76px] bg-[#cce0ff] pl-[3px] text-left">
          Untitled-1
        </button>
        <button type="button" aria-label="New document" className="ml-px grid w-[19px] place-items-center bg-[#d8d8d8]">
          <Svg w={11} h={11}>
            <path d="M5.500 0v11M0 5.500h11" stroke="#adadad" strokeWidth="2" />
          </Svg>
        </button>
      </div>
      <TopRuler />
      <div className="flex min-h-0 flex-1">
        <LeftRuler />
        <div className="flex min-w-0 flex-1 flex-col">
          <div className="flex min-h-0 flex-1 border-b border-[#8c8c8c]">
            <Canvas />
            <div className="mr-[2px] flex w-[15px] shrink-0 flex-col bg-white">
              <button type="button" aria-label="Scroll up" className="grid h-[17px] place-items-center bg-[#f0f0f0]">
                <Chevron dir="up" />
              </button>
              <span className="flex min-h-0 flex-1 flex-col">
                <span className="flex-[121]" />
                <span className="flex-[301] bg-[#cdcdcd]" />
                <span className="flex-[121]" />
              </span>
              <button type="button" aria-label="Scroll down" className="grid h-[17px] place-items-center bg-[#f0f0f0]">
                <Chevron dir="down" />
              </button>
            </div>
          </div>
          <PageBar />
        </div>
      </div>
      <div className="flex h-[19px] shrink-0 items-center border-t border-[#d2d2d2] pl-1">
        <Svg w={3} h={10}>
          <path d="M0 0h2v2H0zM0 4h2v2H0zM0 8h2v2H0z" fill={GREY} />
        </Svg>
        <button type="button" aria-label="Palette options" className="ml-[5px]">
          <Svg w={5} h={9}>
            <path d="M0 0l5 4.500L0 9z" fill="#000" />
          </Svg>
        </button>
        <button type="button" aria-label="Palette eyedropper" className="ml-[7px]">
          <Dropper a="#2c2c48" b="#8ba7a0" />
        </button>
        <button type="button" aria-label="Palette left" className="ml-[3px]">
          <Chevron dir="left" color="#cfcfcf" />
        </button>
        <div className="ml-[5px] flex h-[18px] border border-[#555]">
          <button type="button" aria-label="No color" className="bg-white">
            <Svg w={16} h={16}>
              <path d="M1 1l14 14M15 1L1 15" stroke="#222" />
            </Svg>
          </button>
          <button type="button" aria-label="Red" className="w-[17px] border-l border-[#555] bg-[#ed1c24]" />
          <button type="button" aria-label="Yellow" className="w-[17px] border-l border-[#555] bg-[#fff200]" />
        </div>
        <span className="ml-auto mr-[11px] flex gap-[10px]">
          <Chevron dir="right" color="#cfcfcf" />
          <Svg w={9} h={9}>
            <path d="M1 1l3 3.500L1 8M5 1l3 3.500L5 8" stroke={GREY} strokeWidth="1.200" />
          </Svg>
        </span>
      </div>
    </section>
  );
}

function Docker() {
  return (
    <aside className="flex w-[270px] shrink-0 flex-col">
      <div className="flex h-[19px] shrink-0 items-center justify-end bg-[#e9e9e9] pr-[6px]">
        <button type="button" aria-label="Close docker">
          <Svg w={8} h={8}>
            <path d="M.5.500l7 7M7.500.500l-7 7" stroke="#a0a0a0" strokeWidth="1.400" />
          </Svg>
        </button>
      </div>
      <div className="flex flex-1 justify-end">
        <div className="flex w-[19px] flex-col items-center bg-[#e9e9e9]">
          <button type="button" className="flex h-[148px] w-full shrink-0 flex-col items-center gap-[6px] bg-[#b0b0b0] pt-1">
            <Svg w={13} h={13}>
              <path d="M.5 0v13" stroke="#4c4c68" strokeDasharray="1 1" />
              <rect x="1.500" y="1.500" width="11" height="4" fill="#fff" stroke={MID} />
              <rect x="1.500" y="7.500" width="8" height="4" fill="#e9e9f0" stroke={MID} />
            </Svg>
            <span className="leading-[14px] [writing-mode:vertical-rl]">Align and Distribute</span>
          </button>
          <button type="button" aria-label="Add docker" className="mt-[17px]">
            <PlusCircle />
          </button>
        </div>
      </div>
    </aside>
  );
}

const PALETTE = [
  "#231f20", "#414042", "#58595b", "#6d6e71", "#808285", "#939598", "#a3a7aa", "#bcbec0", "#d1d2d4", "#e6e7e8", "#ffffff",
  "#2e3192", "#00adef", "#00a651", "#fff200", "#ed1c24", "#ec008c", "#a54586", "#f58220", "#f7acb0", "#836d64", "#c7c4e2",
  "#9a94c9", "#6e8cca", "#776fb5", "#857ba8", "#465f8c", "#524c6b", "#667a96", "#0095da", "#8dd8f8", "#a3bfd3",
];

function ColorPalette() {
  return (
    <aside className="flex w-[19px] shrink-0 flex-col items-center border-l border-[#d2d2d2]">
      <div className="flex h-[54px] shrink-0 flex-col items-center pt-1">
        <Svg w={10} h={2}>
          <path d="M0 0h2v2H0zM4 0h2v2H4zM8 0h2v2H8z" fill={GREY} />
        </Svg>
        <button type="button" aria-label="Palette menu" className="mt-1">
          <Svg w={5} h={9}>
            <path d="M0 0l5 4.500L0 9z" fill="#000" />
          </Svg>
        </button>
        <button type="button" aria-label="Eyedropper" className="mt-1">
          <Dropper a="#b4b4b4" b="#c9c9c9" />
        </button>
        <button type="button" aria-label="Palette up" className="mt-1">
          <Chevron dir="up" color="#cfcfcf" />
        </button>
      </div>
      <div className="flex min-h-0 w-full flex-1 flex-col overflow-hidden border-x border-[#555]">
        <button type="button" aria-label="No color" className="shrink-0 border-t border-[#555] bg-white">
          <Svg w={16} h={16}>
            <path d="M1 1l14 14M15 1L1 15" stroke="#222" />
          </Svg>
        </button>
        {PALETTE.map((c) => (
          <button
            type="button"
            key={c}
            aria-label={c}
            className={c === "#fff200" ? "h-[17px] w-full shrink-0 border-y border-white" : "h-[17px] w-full shrink-0 border-t border-[#555]"}
            style={{ backgroundColor: c }}
          />
        ))}
      </div>
      <div className="flex h-[41px] shrink-0 flex-col items-center gap-[9px] pt-[3px]">
        <Chevron dir="down" color={GREY} />
        <Svg w={9} h={9}>
          <path d="M1 1l3 3.500L1 8M5 1l3 3.500L5 8" stroke={GREY} strokeWidth="1.200" />
        </Svg>
      </div>
    </aside>
  );
}

function StatusBar() {
  return (
    <footer className="flex h-7 shrink-0 items-center whitespace-pre border-t border-[#d2d2d2] pt-[6px] text-[11px]">
      <span className="w-[103px] pl-[3px]">( 75,725; 187,427 )</span>
      <button type="button" aria-label="Cursor options" className="grid h-[14px] w-[14px] place-items-center border border-black bg-white">
        <Svg w={5} h={8}>
          <path d="M0 0l5 4-5 4z" fill="#000" />
        </Svg>
      </button>
      <span className="ml-[38px] w-[668px]">Rectangle on Layer 1  (Lens)</span>
      <Svg w={15} h={15}>
        <rect x=".5" y=".5" width="14" height="12" fill="#c2d8d0" stroke={MID} />
        <rect x="2" y="2" width="11" height="4" fill="#d8a0a0" />
        <rect x="2" y="6" width="11" height="5" fill="#9cc4a8" />
        <rect x="4" y="3" width="7" height="7" fill="#eef0f4" />
        <circle cx="7.500" cy="6.500" r="2.600" fill="#fff" stroke="#222" />
        <circle cx="7.500" cy="6.500" r="1" fill="#222" />
        <path d="M4 14h7" stroke={MID} strokeWidth="1.500" />
      </Svg>
      <span className="ml-[14px]">
        <Svg w={15} h={16}>
          <path d="M.8 8.500L7 2l6 6.500L7.500 15z" fill="#fff" stroke={INK} />
          <path d="M2 9h10.500l-5 5.500z" fill="#ee7d11" />
          <path d="M12 8l2.500 1v5" stroke="#ee7d11" strokeWidth="1.500" />
          <path d="M7 0v5" stroke={INK} />
        </Svg>
      </span>
      <span className="ml-[6px] h-[18px] w-[18px] border border-[#a0a0a0] bg-[#ed1c24]" />
      <span className="ml-[3px] w-[161px]">C:0 M:100 Y:100 K:0</span>
      <span className="h-6 w-px bg-[#d2d2d2]" />
      <span className="ml-2">
        <Svg w={9} h={15}>
          <path d="M4.500 1L1 7l2 4h3l2-4z" fill="#fff" stroke={MID} />
          <path d="M4.500 2v6" stroke={MID} />
          <path d="M1.500 13h6" stroke={INK} strokeWidth="2" />
        </Svg>
      </span>
      <span className="ml-[9px] h-[18px] w-[18px] border border-[#a0a0a0] bg-[#fff200]" />
      <span className="ml-[3px]">C:0 M:0 Y:100 K:0  0,500 pt</span>
    </footer>
  );
}

export default function App() {
  return (
    <div className="flex h-screen flex-col overflow-hidden bg-[#f3f3f3] font-['Open_Sans','Noto_Sans',sans-serif] text-xs text-black">
      <TitleBar />
      <MenuBar />
      <StandardBar />
      <PropertyBar />
      <main className="flex min-h-0 flex-1">
        <Toolbox />
        <PageScene />
        <div className="flex w-[5px] shrink-0 justify-center bg-white">
          <span className="w-px bg-[#cfcfcf]" />
        </div>
        <Docker />
        <ColorPalette />
      </main>
      <StatusBar />
    </div>
  );
}
